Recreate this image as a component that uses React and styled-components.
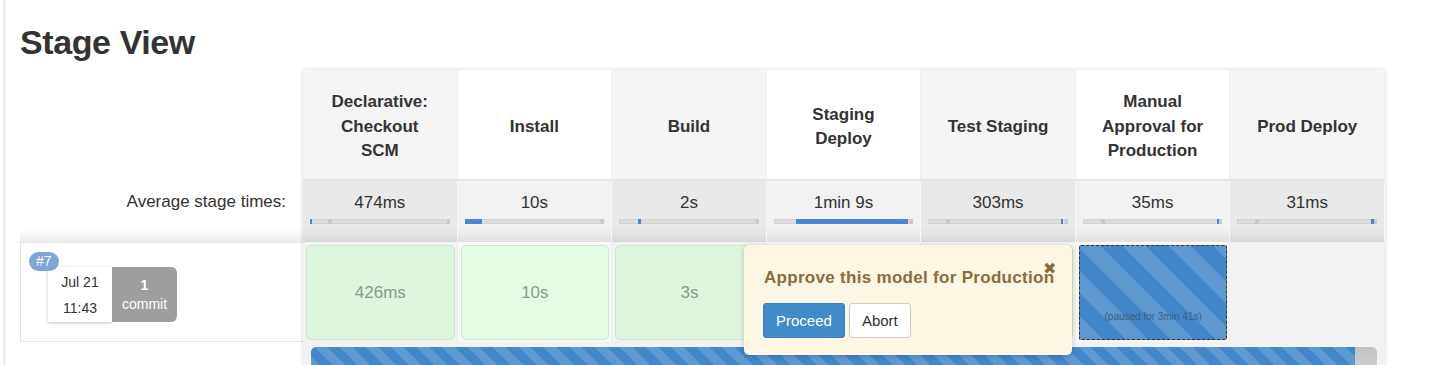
import React from 'react'
import styled, { createGlobalStyle } from 'styled-components'

const GlobalStyle = createGlobalStyle`
    html, body {
        margin: 0;
        padding: 0;
        background: #fff;
        font-family: "Liberation Sans", Arial, sans-serif;
        color: #333;
    }
`

const stages = [
    { name: 'Declarative: Checkout SCM', avg: '474ms', bar: { left: 0, width: 1, marker: 13 } },
    { name: 'Install', avg: '10s', bar: { left: 0, width: 13 } },
    { name: 'Build', avg: '2s', bar: { left: 14, width: 2 } },
    { name: 'Staging Deploy', avg: '1min 9s', bar: { left: 16, width: 82 } },
    { name: 'Test Staging', avg: '303ms', bar: { left: 97, width: 2, marker: 13 } },
    { name: 'Manual Approval for Production', avg: '35ms', bar: { left: 98, width: 2, marker: 13 } },
    { name: 'Prod Deploy', avg: '31ms', bar: { left: 98, width: 2, marker: 13 } },
]

const results = [
    { kind: 'success', time: '426ms' },
    { kind: 'success', time: '10s' },
    { kind: 'success', time: '3s' },
    { kind: 'success', time: '' },
    { kind: 'success', time: '' },
    { kind: 'paused', time: '(paused for 3min 41s)' },
    { kind: 'empty' },
]

const App = () => {
    return (
        <Page>
            <GlobalStyle />
            <SideRule />
            <Main>
                <Title>Stage View</Title>
                <Board>
                    <LabelColumn>
                        <HeadSpacer />
                        <AvgLabel>Average stage times:</AvgLabel>
                        <BuildHead>
                            <BuildCard>
                                <BuildBadge>#7</BuildBadge>
                                <DateBox>
                                    <span>Jul 21</span>
                                    <span>11:43</span>
                                </DateBox>
                                <CommitBox>
                                    <strong>1</strong>
                                    <span>commit</span>
                                </CommitBox>
                            </BuildCard>
                        </BuildHead>
                    </LabelColumn>

                    <StagePanel>
                        <HeaderRow>
                            {stages.map((s, i) => (
                                <HeaderCell key={s.name} $odd={i % 2 === 0}>{s.name}</HeaderCell>
                            ))}
                        </HeaderRow>
                        <AvgRow>
                            {stages.map((s, i) => (
                                <AvgCell key={s.name} $odd={i % 2 === 0}>
                                    {s.avg}
                                    <Track>
                                        {s.bar.marker != null && <Marker style={{ left: s.bar.marker + '%' }} />}
                                        <Fill style={{ left: s.bar.left + '%', width: s.bar.width + '%' }} />
                                    </Track>
                                </AvgCell>
                            ))}
                        </AvgRow>
                        <ResultRow>
                            {results.map((r, i) => (
                                <ResultCell key={i} $odd={i % 2 === 0}>
                                    {r.kind === 'success' && <SuccessBox $odd={i % 2 === 0}>{r.time}</SuccessBox>}
                                    {r.kind === 'paused' && <PausedBox><PausedText>{r.time}</PausedText></PausedBox>}
                                </ResultCell>
                            ))}
                            <Approval>
                                <CloseMark>✖</CloseMark>
                                <ApprovalTitle>Approve this model for Production</ApprovalTitle>
                                <ButtonRow>
                                    <Button $primary>Proceed</Button>
                                    <Button>Abort</Button>
                                </ButtonRow>
                            </Approval>
                        </ResultRow>
                        <ProgressRow>
                            <RunBar>
                                <RunFill />
                                <RunRest />
                            </RunBar>
                        </ProgressRow>
                    </StagePanel>
                </Board>
            </Main>
        </Page>
    );
}

export default App

const Page = styled.div`
    display: flex;
    min-height: 365px;
    overflow: hidden;
`;

const SideRule = styled.div`
    width: 3px;
    margin-left: 3px;
    background: #ebeef2;
    flex-shrink: 0;
`;

const Main = styled.div`
    padding-left: 14px;
    flex: 1;
`;

const Title = styled.h1`
    font-size: 34px;
    line-height: 40px;
    font-weight: bold;
    color: #333;
    margin: 22px 0 8px 0;
    letter-spacing: -0.4px;
`;

const Board = styled.div`
    display: flex;
    align-items: flex-start;
`;

const LabelColumn = styled.div`
    width: 283px;
    display: flex;
    flex-direction: column;
`;

const HeadSpacer = styled.div`
    height: 110px;
`;

const AvgLabel = styled.div`
    height: 62px;
    box-sizing: border-box;
    padding: 12px 17px 0 0;
    text-align: right;
    font-size: 17px;
    line-height: 20px;
    color: #333;
    background: linear-gradient(to bottom, rgba(0,0,0,0) 78%, rgba(0,0,0,0.07) 100%);
`;

const BuildHead = styled.div`
    height: 100px;
    box-sizing: border-box;
    border: 1px solid #e6e6e6;
    border-right: none;
    background: #fff;
    padding: 24px 0 0 27px;
`;

const BuildCard = styled.div`
    position: relative;
    display: flex;
    width: max-content;
`;

const BuildBadge = styled.div`
    position: absolute;
    top: -15px;
    left: -19px;
    z-index: 2;
    background: #7ea6d3;
    color: #fff;
    font-size: 14px;
    line-height: 19px;
    height: 19px;
    padding: 0 7px;
    border-radius: 10px;
`;

const DateBox = styled.div`
    width: 64px;
    height: 55px;
    background: #fff;
    box-shadow: 0 1px 3px rgba(0,0,0,0.25);
    display: flex;
    flex-direction: column;
    align-items: center;
    justify-content: center;
    gap: 8px;
    font-size: 14px;
    line-height: 18px;
    color: #333;
`;

const CommitBox = styled.div`
    width: 65px;
    height: 55px;
    background: #9e9e9e;
    border-radius: 0 6px 6px 0;
    display: flex;
    flex-direction: column;
    align-items: center;
    justify-content: center;
    gap: 1px;
    color: #fff;
    font-size: 14px;
    line-height: 18px;

    strong {
        font-weight: bold;
    }
`;

const StagePanel = styled.div`
    position: relative;
    width: 1082px;
    box-shadow: 0 0 4px rgba(0,0,0,0.18);
    display: flex;
    flex-direction: column;
`;

const HeaderRow = styled.div`
    display: grid;
    grid-template-columns: repeat(7, 1fr);
    height: 111px;
    border-bottom: 2px solid #e6e6e6;
    box-sizing: border-box;
`;

const HeaderCell = styled.div`
    display: flex;
    align-items: center;
    justify-content: center;
    text-align: center;
    padding: 5px 18px 0;
    font-size: 17px;
    line-height: 24.5px;
    font-weight: bold;
    color: #333;
    background: ${p => (p.$odd ? '#f5f5f5' : '#fff')};
    border-right: 1px solid #f0f0f0;
`;

const AvgRow = styled.div`
    display: grid;
    grid-template-columns: repeat(7, 1fr);
    height: 61px;
`;

const AvgCell = styled.div`
    box-sizing: border-box;
    padding: 12px 7px 0;
    text-align: center;
    font-size: 17px;
    line-height: 20px;
    color: #333;
    background: ${p => (p.$odd ? '#e9e9e9' : '#f2f2f2')};
    background-image: linear-gradient(to bottom, rgba(0,0,0,0) 78%, rgba(0,0,0,0.07) 100%);
    border-right: 1px solid #f7f7f7;
`;

const Track = styled.div`
    position: relative;
    height: 5px;
    margin-top: 6px;
    background: #dcdcdc;
    box-shadow: inset 0 0 0 1px #d2d2d2;
    border-right: 3px solid #c9c9c9;
`;

const Marker = styled.div`
    position: absolute;
    top: 0;
    width: 4px;
    height: 5px;
    background: #c8c8c8;
`;

const Fill = styled.div`
    position: absolute;
    top: 0;
    min-width: 2px;
    height: 5px;
    background: #4a87d2;
`;

const ResultRow = styled.div`
    position: relative;
    display: grid;
    grid-template-columns: repeat(7, 1fr);
    height: 100px;
`;

const ResultCell = styled.div`
    box-sizing: border-box;
    padding: 3px 2px 2px 3px;
    background: ${p => (p.$odd ? '#f3f3f3' : '#f8f8f8')};
    border-right: 1px solid #ececec;
    display: flex;
`;

const SuccessBox = styled.div`
    flex: 1;
    display: flex;
    align-items: center;
    justify-content: center;
    background: ${p => (p.$odd ? '#ddf6dd' : '#e3fce3')};
    border: 1px solid #cde6cd;
    border-radius: 5px;
    font-size: 17px;
    color: #8c9a8c;
`;

const PausedBox = styled.div`
    flex: 1;
    display: flex;
    align-items: flex-end;
    justify-content: center;
    padding-bottom: 17px;
    border: 1px dashed #333;
    border-radius: 2px;
    background-color: #4287ca;
    background-image: repeating-linear-gradient(
        45deg,
        rgba(255,255,255,0.14) 0px,
        rgba(255,255,255,0.14) 16px,
        rgba(255,255,255,0) 16px,
        rgba(255,255,255,0) 32px
    );
`;

const PausedText = styled.span`
    font-size: 10px;
    color: #3a5f86;
`;

const Approval = styled.div`
    position: absolute;
    top: 3px;
    left: 441px;
    width: 328px;
    height: 110px;
    box-sizing: border-box;
    padding: 23px 19px 0 20px;
    background: #fcf6e3;
    border-radius: 5px;
    box-shadow: 0 1px 5px rgba(0,0,0,0.2);
    z-index: 5;
`;

const CloseMark = styled.span`
    position: absolute;
    top: 16px;
    right: 16px;
    font-size: 16px;
    color: #8a6d3b;
    line-height: 16px;
`;

const ApprovalTitle = styled.div`
    font-size: 17px;
    line-height: 20px;
    font-weight: bold;
    color: #8a6d3b;
    white-space: nowrap;
    letter-spacing: 0.3px;
`;

const ButtonRow = styled.div`
    display: flex;
    gap: 4px;
    margin-top: 15px;
    margin-left: -1px;
`;

const Button = styled.button`
    height: 35px;
    box-sizing: border-box;
    padding: 0 12px;
    font-family: "Liberation Sans", Arial, sans-serif;
    font-size: 15px;
    border-radius: 3px;
    cursor: pointer;
    color: ${p => (p.$primary ? '#fff' : '#333')};
    background: ${p => (p.$primary ? '#428bca' : '#fff')};
    border: 1px solid ${p => (p.$primary ? '#3a7fba' : '#ccc')};
`;

const ProgressRow = styled.div`
    background: #f2f2f2;
    padding: 5px 8px 0;
    height: 30px;
    box-sizing: border-box;
`;

const RunBar = styled.div`
    display: flex;
    height: 22px;
    border-radius: 5px;
    overflow: hidden;
`;

const RunFill = styled.div`
    flex: 1;
    background-color: #4287ca;
    background-image: repeating-linear-gradient(
        45deg,
        rgba(255,255,255,0.15) 0px,
        rgba(255,255,255,0.15) 9px,
        rgba(255,255,255,0) 9px,
        rgba(255,255,255,0) 18px
    );
`;

const RunRest = styled.div`
    width: 22px;
    background: linear-gradient(to bottom, #c2c2c2, #d0d0d0);
`;
